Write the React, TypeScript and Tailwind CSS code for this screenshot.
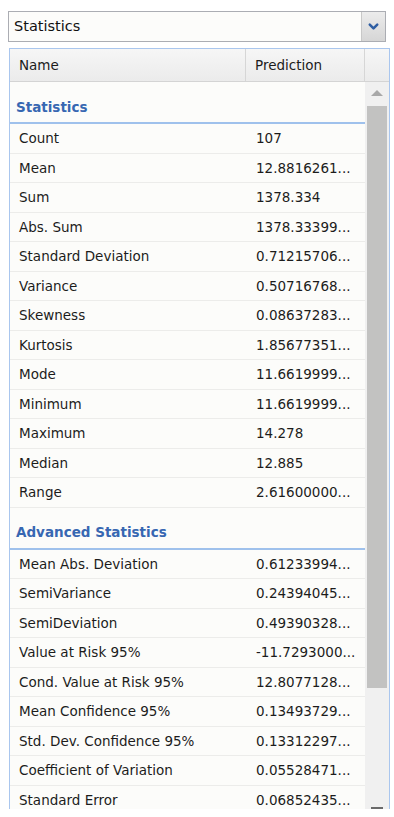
import { ChevronDown } from 'lucide-react'

type Row = { name: string; value: string }

const basic: Row[] = [
  { name: 'Count', value: '107' },
  { name: 'Mean', value: '12.8816261...' },
  { name: 'Sum', value: '1378.334' },
  { name: 'Abs. Sum', value: '1378.33399...' },
  { name: 'Standard Deviation', value: '0.71215706...' },
  { name: 'Variance', value: '0.50716768...' },
  { name: 'Skewness', value: '0.08637283...' },
  { name: 'Kurtosis', value: '1.85677351...' },
  { name: 'Mode', value: '11.6619999...' },
  { name: 'Minimum', value: '11.6619999...' },
  { name: 'Maximum', value: '14.278' },
  { name: 'Median', value: '12.885' },
  { name: 'Range', value: '2.61600000...' },
]

const advanced: Row[] = [
  { name: 'Mean Abs. Deviation', value: '0.61233994...' },
  { name: 'SemiVariance', value: '0.24394045...' },
  { name: 'SemiDeviation', value: '0.49390328...' },
  { name: 'Value at Risk 95%', value: '-11.7293000...' },
  { name: 'Cond. Value at Risk 95%', value: '12.8077128...' },
  { name: 'Mean Confidence 95%', value: '0.13493729...' },
  { name: 'Std. Dev. Confidence 95%', value: '0.13312297...' },
  { name: 'Coefficient of Variation', value: '0.05528471...' },
  { name: 'Standard Error', value: '0.06852435...' },
]

function Section({ title, rows }: { title: string; rows: Row[] }) {
  return (
    <>
      <div className="flex h-[42px] shrink-0 items-end border-b-2 border-[#9fc1ec] pb-[5px] pl-[6px] text-[13.5px] font-bold text-[#3767b2]">
        {title}
      </div>
      {rows.map((r) => (
        <div key={r.name} className="flex h-[29.5px] shrink-0 items-center border-b border-[#ececea] text-[13.5px] text-[#1c1c1c]">
          <span className="w-[236px] pl-[9px]">{r.name}</span>
          <span className="pl-[10px]">{r.value}</span>
        </div>
      ))}
    </>
  )
}

export default function App() {
  return (
    <div className="h-[817px] w-[394px] overflow-hidden bg-white pt-[11px] font-['DejaVu_Sans',sans-serif]">
      {/* combo */}
      <div className="mx-[8px] flex h-[31px] border border-[#abadb3] bg-[#fcfcfa]">
        <div className="flex flex-1 items-center pl-[5px] text-[14.5px] text-[#111]">Statistics</div>
        <div className="flex w-[24px] items-center justify-center border-l border-[#c8c8c8] bg-gradient-to-b from-[#ececec] to-[#d6d6d6]">
          <ChevronDown size={15} strokeWidth={4} className="text-[#2f5ea3]" />
        </div>
      </div>

      {/* grid */}
      <div className="ml-[9px] mt-[6px] flex h-[761px] w-[381px] flex-col overflow-hidden border-x border-t border-[#a9c6ee] bg-[#fcfcfa]">
        <div className="flex h-[33px] shrink-0 border-b border-[#d4d4d4] bg-gradient-to-b from-[#f6f6f6] to-[#ebebeb] text-[13.5px] text-[#1c1c1c]">
          <div className="flex w-[236px] items-center border-r border-[#d6d6d6] pl-[9px]">Name</div>
          <div className="flex w-[119px] items-center border-r border-[#d6d6d6] pl-[9px]">Prediction</div>
          <div className="flex-1" />
        </div>
        <div className="flex min-h-0 flex-1">
          <div className="flex w-[355px] flex-col overflow-hidden">
            <Section title="Statistics" rows={basic} />
            <Section title="Advanced Statistics" rows={advanced} />
          </div>
          <div className="flex w-[24px] flex-col items-center bg-[#f0f0f0]">
            <div className="flex h-[22px] shrink-0 items-center justify-center">
              <div className="h-0 w-0 border-x-[6px] border-b-[6px] border-x-transparent border-b-[#a8a8a8]" />
            </div>
            <div className="mt-[2px] h-[582px] w-[20px] shrink-0 bg-[#c2c2c1]" />
            <div className="flex-1" />
            <div className="h-[2px] w-[12px] shrink-0 bg-[#6a6a6a]" />
          </div>
        </div>
      </div>
    </div>
  )
}
